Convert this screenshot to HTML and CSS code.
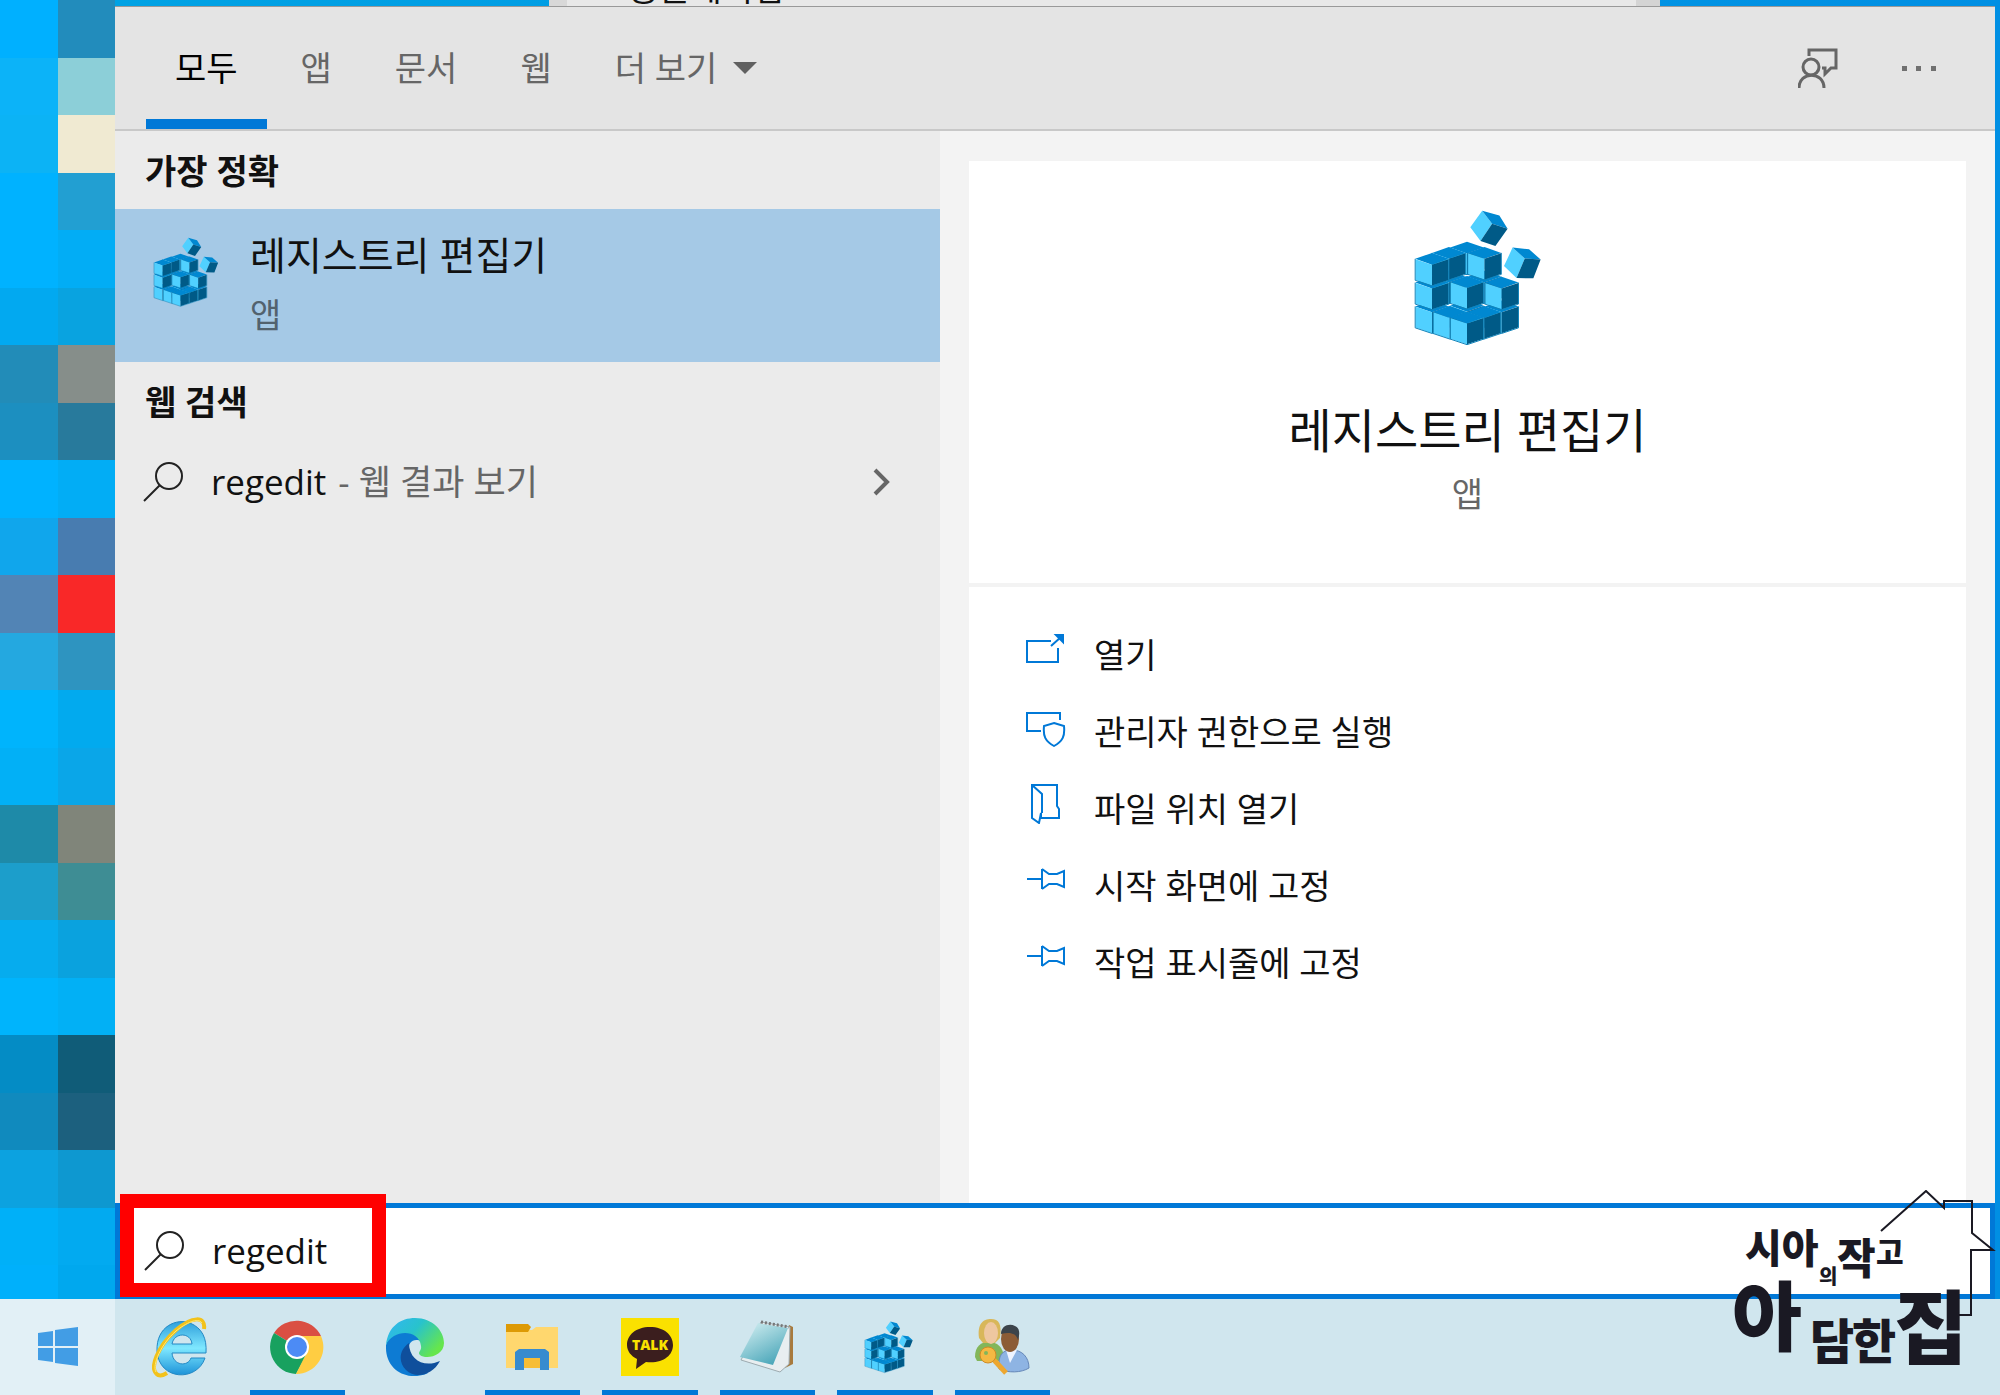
FILE: index.html
```html
<!DOCTYPE html>
<html lang="ko">
<head>
    <meta charset="UTF-8">
    <title>레지스트리 편집기 - 검색</title>
    <link rel="stylesheet" href="styles.css">
</head>
<body>
    <!-- Shared icons -->
    <svg class="defs" aria-hidden="true">
        <defs>
            <g id="cube">
                <path fill="#0088d1" d="M-51-18 0-36 51-18 0 0z"/>
                <path fill="#50d0ff" d="M-50-17 0 0v63l-50-17z"/>
                <path fill="#005a87" d="M0 0 50-17v63L0 63z"/>
                <path stroke="#1283b8" stroke-width="3" fill="none" d="M-51-18v65L0 64l51-17v-65"/>
            </g>
            <symbol id="regedit" viewBox="35 55 460 415">
                <use href="#cube" x="262" y="190"/>
                <use href="#cube" x="207" y="278"/>
                <use href="#cube" x="315" y="278"/>
                <use href="#cube" x="207" y="206"/>
                <use href="#cube" x="315" y="206"/>
                <use href="#cube" x="156" y="368"/>
                <use href="#cube" x="156" y="296"/>
                <use href="#cube" x="156" y="224"/>
                <use href="#cube" x="367" y="368"/>
                <use href="#cube" x="367" y="296"/>
                <use href="#cube" x="262" y="366"/>
                <use href="#cube" x="262" y="294"/>
                <use href="#cube" x="210" y="385"/>
                <use href="#cube" x="314" y="385"/>
                <use href="#cube" x="262" y="402"/>
                <path fill="#50d0ff" d="m308 60-36 50 31 42 35-52zM400 172l-26 56 38 36 25-59z"/>
                <path fill="#0088d1" d="m308 60 52 15 25 40-47-15zM400 172l50 5 35 31-48-3z"/>
                <path fill="#005a87" d="m338 100 47 15-37 52-45-15zM437 205l48 3-22 57-51-1z"/>
            </symbol>
            <symbol id="search" viewBox="0 0 40 40">
                <circle cx="26" cy="14" r="13"/>
                <path d="M16.500 23.500 1 39"/>
            </symbol>
            <symbol id="pin" viewBox="0 0 40 40">
                <path d="M1 18h15M16 8v20M16 8l7 5h8l7-3v16l-7-3h-8l-7 5"/>
            </symbol>
        </defs>
    </svg>

    <div class="desktop">
        <div class="mosaic" aria-hidden="true">
            <i style="background:#00b0ff"></i><i style="background:#228cbc"></i>
            <i style="background:#0cb3f8"></i><i style="background:#8ccfd8"></i>
            <i style="background:#0cb3f5"></i><i style="background:#f0ead2"></i>
            <i style="background:#00b2ff"></i><i style="background:#229fd2"></i>
            <i style="background:#00b2ff"></i><i style="background:#02adf5"></i>
            <i style="background:#02a9f0"></i><i style="background:#09a3e0"></i>
            <i style="background:#228cb8"></i><i style="background:#868e8a"></i>
            <i style="background:#1c8fc0"></i><i style="background:#287a9c"></i>
            <i style="background:#00b2ff"></i><i style="background:#02adf5"></i>
            <i style="background:#10a6ec"></i><i style="background:#487cb0"></i>
            <i style="background:#5284b5"></i><i style="background:#f92828"></i>
            <i style="background:#24a8e0"></i><i style="background:#2e94c0"></i>
            <i style="background:#00b4fc"></i><i style="background:#02aaee"></i>
            <i style="background:#02b0f6"></i><i style="background:#0aa6e8"></i>
            <i style="background:#1e8aa8"></i><i style="background:#80857a"></i>
            <i style="background:#1c9ecb"></i><i style="background:#3e8d94"></i>
            <i style="background:#06acee"></i><i style="background:#0aa2de"></i>
            <i style="background:#00b4fc"></i><i style="background:#02b0f5"></i>
            <i style="background:#048cc5"></i><i style="background:#105c78"></i>
            <i style="background:#108abe"></i><i style="background:#1c607e"></i>
            <i style="background:#0ca2e0"></i><i style="background:#0e98d0"></i>
            <i style="background:#00b0f8"></i><i style="background:#02aaf0"></i>
            <i style="background:#00b0fb"></i><i style="background:#00a8ee"></i>
        </div>

        <div class="screen">
            <div class="behind">
                <div class="behind-window"><span>공문에서검</span></div>
            </div>

            <main class="panel">
                <header class="tabs">
                    <nav>
                        <button class="tab active">모두</button>
                        <button class="tab">앱</button>
                        <button class="tab">문서</button>
                        <button class="tab">웹</button>
                        <button class="tab more">더 보기 <span class="caret"></span></button>
                    </nav>
                    <button class="tool" aria-label="피드백">
                        <svg viewBox="0 0 40 40" width="40" height="40">
                            <path d="M11 8V2h27v18h-5l-6 6v-6h-3"/>
                            <circle cx="13" cy="19" r="8"/>
                            <path d="M1 40c0-17 25-17 25 0"/>
                        </svg>
                    </button>
                    <button class="tool" aria-label="옵션">
                        <svg class="dots" viewBox="0 0 34 5" width="34" height="5">
                            <path d="M0 0h5v5H0zM14 0h5v5h-5zM29 0h5v5h-5z"/>
                        </svg>
                    </button>
                </header>

                <div class="results">
                    <section class="list">
                        <h2>가장 정확</h2>
                        <a class="best" href="#">
                            <svg width="78" height="70"><use href="#regedit"/></svg>
                            <span>
                                <strong>레지스트리 편집기</strong>
                                <small>앱</small>
                            </span>
                        </a>
                        <h2>웹 검색</h2>
                        <a class="web" href="#">
                            <svg class="line" width="40" height="40"><use href="#search"/></svg>
                            <span class="query">regedit</span>
                            <span class="hint">- 웹 결과 보기</span>
                            <svg class="chevron" viewBox="0 0 18 28" width="18" height="28"><path d="m3 2 12 12L3 26"/></svg>
                        </a>
                    </section>

                    <section class="detail">
                        <div class="card">
                            <svg width="152" height="137"><use href="#regedit"/></svg>
                            <h1>레지스트리 편집기</h1>
                            <p>앱</p>
                        </div>
                        <ul class="actions">
                            <li><a href="#">
                                <svg viewBox="0 0 40 40" width="40" height="40"><path d="M25 11H1v21h31V18M25 16l10-9"/><path class="solid" d="M30 5h7v7z"/></svg>
                                열기</a></li>
                            <li><a href="#">
                                <svg viewBox="0 0 40 40" width="40" height="40"><path d="M34 13V6H1v18h14M28 16l10 3c1 10-1 15-10 20-9-5-11-10-10-20z"/></svg>
                                관리자 권한으로 실행</a></li>
                            <li><a href="#">
                                <svg viewBox="0 0 40 40" width="40" height="40"><path d="M6 1h25v21l2 3v9H15v-5l-2 10-7-5zM6 1l10 9v19"/></svg>
                                파일 위치 열기</a></li>
                            <li><a href="#">
                                <svg width="40" height="40"><use href="#pin"/></svg>
                                시작 화면에 고정</a></li>
                            <li><a href="#">
                                <svg width="40" height="40"><use href="#pin"/></svg>
                                작업 표시줄에 고정</a></li>
                        </ul>
                    </section>
                </div>

                <div class="searchbar">
                    <label for="q" aria-label="검색">
                        <svg class="line" width="40" height="40"><use href="#search"/></svg>
                    </label>
                    <input id="q" type="text" value="regedit">
                    <div class="highlight"></div>
                </div>
            </main>
        </div>
    </div>

    <footer class="taskbar">
        <button class="start" aria-label="시작">
            <svg viewBox="0 0 40 40" width="40" height="40">
                <path fill="#429de5" d="M0 6l15-2v15H0zM17 3l23-3v19H17zM0 21h15v14L0 33zM17 21h23v18l-23-3z"/>
            </svg>
        </button>
        <div class="apps">
            <button aria-label="Internet Explorer">
                <svg viewBox="0 0 56 64" width="56" height="64">
                    <defs>
                        <linearGradient id="ie" x1="0" y1="0" x2="0" y2="1"><stop offset="0" stop-color="#2f9fdb"/><stop offset=".5" stop-color="#7fe8ff"/><stop offset="1" stop-color="#1d93d8"/></linearGradient>
                    </defs>
                    <path fill="url(#ie)" stroke="#2489c4" d="M54 38H20c1 13 16 14 19 5h14c-8 24-46 23-48-7C4 11 25 3 38 8c12 5 17 15 16 30zM20 29h20c-1-12-18-12-20 0z"/>
                    <path fill="none" stroke="#f2c21b" stroke-width="4" d="M52 14C54 1 40 1 24 15 6 31-4 54 6 60c3 1 6 0 9-2"/>
                    <path fill="none" stroke="#ffe979" stroke-width="1" d="M50 8C46 2 34 8 24 16 9 29 0 50 4 57"/>
                </svg>
            </button>
            <button class="open" aria-label="Chrome">
                <svg viewBox="0 0 54 54" width="54" height="54">
                    <path fill="#da4f43" d="M27 27 4 13a27 27 0 0 1 47 3H27z"/>
                    <path fill="#18a15f" d="M27 27 4 13a27 27 0 0 0 22 41l11-20z"/>
                    <path fill="#ffcd42" d="M27 27V16h24a27 27 0 0 1-25 38l10-20z"/>
                    <circle cx="27" cy="27" r="12" fill="#fff"/>
                    <circle cx="27" cy="27" r="10" fill="#4c8bf5"/>
                </svg>
            </button>
            <button aria-label="Edge">
                <svg viewBox="0 0 58 58" width="58" height="58">
                    <defs>
                        <linearGradient id="edge" x1="0" y1="0" x2="1" y2=".6"><stop offset="0" stop-color="#32b5f4"/><stop offset=".5" stop-color="#28c3cc"/><stop offset="1" stop-color="#66e64c"/></linearGradient>
                    </defs>
                    <path fill="#0d7bd3" d="M0 27C5 10 28 8 37 24c-9-5-15 0-15 9 0 10 8 19 20 22C23 64 0 53 0 30z"/>
                    <path fill="#0f4f9c" d="M23 25c-10 7-11 19-3 27 9 9 26 6 34-9-16 7-31-1-31-18z"/>
                    <path fill="url(#edge)" d="M0 27C2 8 15 0 29 0c18 0 29 13 29 25 0 13-18 17-24 12-3-3 2-4 1-9C33 11 7 11 0 27z"/>
                </svg>
            </button>
            <button class="open" aria-label="파일 탐색기">
                <svg viewBox="0 0 52 46" width="52" height="46">
                    <path fill="#ffd76e" d="M0 6h26l4-3h22v41H0z"/>
                    <path fill="#dd9a05" d="M0 0h22l3 3-3 5H0z"/>
                    <path fill="#f7bd35" d="M18 32h16v12H18z"/>
                    <path fill="#378bcf" d="M9 28l4-3h26l4 3v18h-9V34H18v12H9z"/>
                </svg>
            </button>
            <button class="open" aria-label="카카오톡">
                <svg viewBox="0 0 58 58" width="58" height="58">
                    <path fill="#fae100" d="M0 0h58v58H0z"/>
                    <path fill="#3b1e1e" d="M29 9C15 9 6 17 6 27c0 6 4 11 10 14l-1 10 10-7c16 2 27-6 27-17C52 17 43 9 29 9z"/>
                    <text class="talk" x="29" y="32" text-anchor="middle">TALK</text>
                </svg>
            </button>
            <button class="open" aria-label="메모장">
                <svg viewBox="0 0 56 54" width="56" height="54">
                    <defs>
                        <linearGradient id="note" x1="0" y1="0" x2=".6" y2="1"><stop offset="0" stop-color="#d9f2f4"/><stop offset="1" stop-color="#4fa9bb"/></linearGradient>
                    </defs>
                    <path fill="#a87a3d" d="m50 5 4 2v37l-8 4z"/>
                    <path fill="#e8eef0" stroke="#9dabb0" d="M22 2l29 5-1 37-9 8L2 40z"/>
                    <path fill="url(#note)" d="M19 3l30 5-15 37L1 37z"/>
                    <path stroke="#777" stroke-width="3" stroke-dasharray="2 2" d="M22 2l28 5"/>
                </svg>
            </button>
            <button class="open" aria-label="레지스트리 편집기">
                <svg width="58" height="54"><use href="#regedit"/></svg>
            </button>
            <button class="open" aria-label="사용자 계정">
                <svg viewBox="0 0 56 56" width="56" height="56">
                    <path fill="#82b65a" d="M1 38c0-11 6-15 14-15s14 5 15 15l-5 4H3z"/>
                    <path fill="#d8b75a" d="M5 19C3 5 9 0 17 0s11 5 9 19l-5 5H9z"/>
                    <ellipse cx="17" cy="14" rx="7" ry="11" fill="#eec7a0"/>
                    <path fill="#8eb4e3" stroke="#6688b8" d="M25 50c-1-14 3-19 13-19s17 7 17 18c-8 5-21 5-30 1z"/>
                    <path fill="#eef4ff" d="m32 31 4 13 7-13z"/>
                    <ellipse cx="36" cy="20" rx="9" ry="13" fill="#8c5c36"/>
                    <path fill="#3c444b" d="M27 15c0-8 8-11 14-8 5 2 5 8 3 14-2-7-8-8-17-6z"/>
                    <path fill="none" stroke="#eda72f" stroke-width="5" d="M20 41l12 13"/>
                    <circle cx="14" cy="36" r="8" fill="#f4b943" stroke="#cf8b25"/>
                    <circle cx="12" cy="34" r="2" fill="#82b65a"/>
                </svg>
            </button>
        </div>
    </footer>

    <svg class="watermark" viewBox="0 0 270 190" width="270" height="190" role="img" aria-label="시아의 작고 아담한 집">
        <path d="M151 41 196 1l18 17v-7h28v32l21 17h-22v65h-20"/>
        <text x="15" y="73" font-size="40">시아</text>
        <text x="89" y="94" font-size="20">의</text>
        <text x="107" y="84" font-size="42">작</text>
        <text x="146" y="73" font-size="30">고</text>
        <text x="2" y="155" font-size="76">아</text>
        <text x="80" y="169" font-size="48">담</text>
        <text x="122" y="169" font-size="48">한</text>
        <text x="164" y="167" font-size="80">집</text>
    </svg>
</body>
</html>
```

FILE: styles.css
```css
* {
    box-sizing: border-box;
}
body {
    display: flex;
    flex-direction: column;
    min-height: 100vh;
    margin: 0;
    font-family: "Open Sans", "Noto Sans CJK KR", sans-serif;
    font-size: 34px;
    line-height: 48px;
    color: #111;
    background-color: #00adf5;
}
h1, h2, p, ul {
    margin: 0;
    padding: 0;
}
a {
    color: inherit;
    text-decoration: none;
}
button {
    padding: 0;
    border: 0;
    background: none;
    font: inherit;
    color: inherit;
}
svg {
    display: block;
    flex: none;
}
.defs {
    position: absolute;
    width: 0;
    height: 0;
}

/* Desktop */
.desktop {
    flex: 1;
    display: grid;
    grid-template-columns: 115px 1fr;
}
.mosaic {
    display: grid;
    grid-template-columns: 1fr 1fr;
    align-content: start;
    height: 0;
    min-height: 100%;
    overflow: hidden;
}
.mosaic i {
    aspect-ratio: 1;
}
.screen {
    display: flex;
    flex-direction: column;
    padding-right: 5px;
    background: linear-gradient(to right, #00a2e4, #008fe3);
}
.behind {
    display: flex;
    height: 7px;
    padding: 0 335px 0 434px;
    border-bottom: 1px solid #999;
    overflow: hidden;
}
.behind-window {
    flex: 1;
    display: flex;
    align-items: flex-end;
    padding-left: 61px;
    border-left: 18px solid #d8d8d8;
    border-right: 24px solid #d4d4d4;
    background-color: #e8e8e8;
    line-height: 36px;
}

/* Search panel */
.panel {
    flex: 1;
    display: flex;
    flex-direction: column;
    background-color: #f3f3f3;
}
.tabs {
    display: flex;
    align-items: center;
    gap: 48px;
    height: 124px;
    padding: 0 51px 0 31px;
    border-bottom: 2px solid #c8c8c8;
    background-color: #e4e4e4;
}
.tabs nav {
    flex: 1;
    display: flex;
    align-self: stretch;
    gap: 5px;
}
.tab {
    padding: 0 29px;
    border-top: 10px solid transparent;
    border-bottom: 10px solid transparent;
    color: #666;
}
.tab.active {
    border-bottom-color: #0078d7;
    color: #000;
}
.more {
    display: flex;
    align-items: center;
    gap: 16px;
}
.caret {
    border: 12px solid transparent;
    border-top-color: #606060;
    border-bottom: 0;
}
.tool svg {
    margin: 0 8px;
    fill: none;
    stroke: #666;
    stroke-width: 3;
}
.tool .dots {
    fill: #707070;
    stroke: none;
}
.results {
    flex: 1;
    display: grid;
    grid-template-columns: minmax(0, 825px) 1fr;
}
.list {
    background-color: #ebebeb;
}
.list h2 {
    padding: 16px 30px 14px;
    font-size: 34px;
    font-weight: bold;
}
.best {
    display: flex;
    align-items: flex-start;
    gap: 30px;
    height: 153px;
    padding: 16px 27px;
    background-color: #a5c9e6;
}
.best svg {
    margin-top: 12px;
}
.best strong, .best small {
    display: block;
}
.best strong {
    font-size: 39px;
    font-weight: normal;
    line-height: 60px;
}
.best small {
    font-size: 34px;
    line-height: 60px;
    color: #52626e;
}
.web {
    display: flex;
    align-items: center;
    height: 84px;
    padding: 0 50px 0 28px;
    font-size: 35px;
}
.query {
    margin: 0 12px 0 28px;
}
.hint {
    flex: 1;
    color: #666;
}
.line {
    fill: none;
    stroke: #222;
    stroke-width: 2;
}
.chevron {
    fill: none;
    stroke: #666;
    stroke-width: 4;
}

/* Detail pane */
.detail {
    display: flex;
    flex-direction: column;
    gap: 4px;
    padding: 30px 29px 0;
}
.card {
    display: flex;
    flex-direction: column;
    align-items: center;
    height: 422px;
    padding-top: 48px;
    background-color: #fff;
}
.card h1 {
    margin-top: 48px;
    font-size: 47px;
    font-weight: normal;
    line-height: 72px;
}
.card p {
    margin-top: 4px;
    color: #666;
}
.actions {
    flex: 1;
    padding: 29px 57px;
    background-color: #fff;
    list-style-type: none;
}
.actions a {
    display: flex;
    align-items: center;
    gap: 28px;
    height: 77px;
}
.actions svg {
    margin-bottom: 10px;
    fill: none;
    stroke: #0078d7;
    stroke-width: 2;
}
.actions .solid {
    fill: #0078d7;
}

/* Search box */
.searchbar {
    position: relative;
    display: flex;
    align-items: center;
    gap: 28px;
    height: 96px;
    padding: 0 24px;
    border: 5px solid #0078d7;
    background-color: #fff;
}
.searchbar input {
    flex: 1;
    padding: 0;
    border: 0;
    outline: 0;
    background: none;
    font: inherit;
    font-size: 35px;
    color: #111;
}
.highlight {
    position: absolute;
    top: -14px;
    left: 0;
    width: 266px;
    height: 103px;
    border: 14px solid #f00;
}

/* Taskbar */
.taskbar {
    display: flex;
    height: 96px;
    background-color: #d0e6ee;
}
.start {
    display: flex;
    align-items: center;
    justify-content: center;
    width: 115px;
    background-color: #e2f0f6;
}
.apps {
    display: grid;
    grid-template-columns: repeat(8, 1fr);
    width: 940px;
    margin-left: 6px;
}
.apps button {
    display: flex;
    align-items: center;
    justify-content: center;
    margin: 0 11px;
    border-top: 5px solid transparent;
    border-bottom: 5px solid transparent;
}
.apps .open {
    border-bottom-color: #0078d7;
}
.talk {
    fill: #fae100;
    font-family: "Open Sans", sans-serif;
    font-size: 14px;
    font-weight: 800;
}
.watermark {
    position: absolute;
    right: 0;
    bottom: 15px;
    font-family: "Noto Sans CJK KR", sans-serif;
    font-weight: 900;
    fill: #1a1923;
}
.watermark path {
    fill: none;
    stroke: #1a1923;
    stroke-width: 2;
}
```
